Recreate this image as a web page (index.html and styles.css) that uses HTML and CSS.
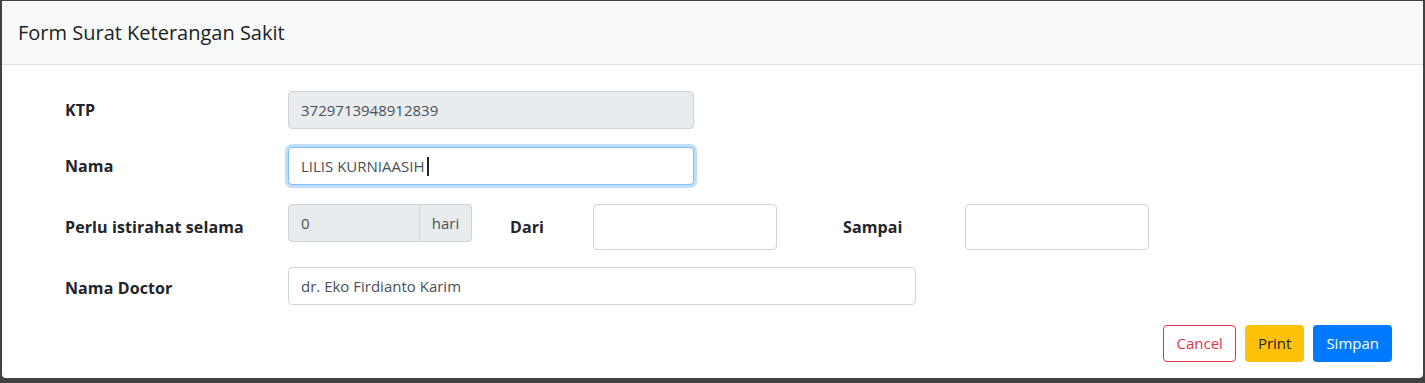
FILE: index.html
```html
<!DOCTYPE html>
<html lang="id">
<head>
    <meta charset="UTF-8">
    <meta name="viewport" content="width=device-width, initial-scale=1.0">
    <title>Form Surat Keterangan Sakit</title>
    <link rel="stylesheet" href="styles.css">
</head>
<body>

  <div class="modal">

    <div class="modal-header">
        <h5 class="modal-title">Form Surat Keterangan Sakit</h5>
    </div>

    <div class="modal-body">

        <div class="form-row">
            <label class="label">KTP</label>
            <input class="form-control w-md" type="text" value="3729713948912839" disabled>
        </div>

        <div class="form-row">
            <label class="label">Nama</label>
            <div class="form-control w-md focused">LILIS KURNIAASIH<span class="caret"></span></div>
        </div>

        <div class="form-row tall">
            <label class="label">Perlu istirahat selama</label>
            <div class="input-group">
                <input class="form-control" type="text" value="0" disabled>
                <span class="addon">hari</span>
            </div>
            <label class="label label-dari">Dari</label>
            <input class="form-control w-sm tall-input" type="text">
            <label class="label label-sampai">Sampai</label>
            <input class="form-control w-sm tall-input" type="text">
        </div>

        <div class="form-row">
            <label class="label label-low">Nama Doctor</label>
            <input class="form-control w-lg" type="text" value="dr. Eko Firdianto Karim">
        </div>

    </div>

    <div class="modal-footer">
        <button class="btn btn-cancel">Cancel</button>
        <button class="btn btn-print">Print</button>
        <button class="btn btn-save">Simpan</button>
    </div>

  </div>

</body>
</html>
```

FILE: styles.css
```css
*{
    margin:0;
    padding:0;
    box-sizing:border-box;
}

html{
    --text:#212529;
    --input-clr:#495057;
    --border:#ced4da;
    --disabled-bg:#e9ecef;
    --header-bg:#f8f9fa;
    --danger:#dc3545;
    --warning:#ffc107;
    --primary:#007bff;
}

body{
    width:1425px;
    height:383px;
    background:#424242;
    font-family:"Open Sans", "Noto Sans", sans-serif;
    font-size:16px;
    color:var(--text);
    padding:1px 2px 0 2px;
    overflow:hidden;
}

.modal{
    width:1421px;
    height:377px;
    background:#fff;
    border-radius:0 0 4px 4px;
    display:flex;
    flex-direction:column;
}

.modal-header{
    height:64px;
    background:var(--header-bg);
    border-bottom:1px solid #dee2e6;
    padding:0 16px;
    display:flex;
    align-items:center;
}

.modal-title{
    font-size:20px;
    font-weight:500;
    line-height:1.5;
    color:#1b1f23;
}

.modal-body{
    padding:26px 0 0 63px;
    display:flex;
    flex-direction:column;
    gap:18px;
}

.form-row{
    display:flex;
    align-items:center;
    height:38px;
}

.form-row.tall{
    height:46px;
    margin-top:1px;
    margin-bottom:-1px;
}

.label{
    font-weight:700;
    width:223px;
    font-size:16px;
    letter-spacing:0.1px;
}

.label-low{ padding-top:4px; }
.label-dari{ width:83px; margin-left:38px; }
.label-sampai{ width:122px; margin-left:66px; }

.form-control{
    height:38px;
    border:1px solid var(--border);
    border-radius:4px;
    padding:0 12px;
    font-family:inherit;
    font-size:15px;
    color:var(--input-clr);
    background:#fff;
    display:flex;
    align-items:center;
    outline:none;
}

.form-control:disabled{ background:var(--disabled-bg); }

.w-md{ width:406px; }
.w-lg{ width:628px; }
.w-sm{ width:184px; }
.tall-input{ height:46px; }

.focused{
    border-color:#80bdff;
    box-shadow:0 0 0 3px rgba(0,123,255,.25);
}

.caret{
    display:inline-block;
    width:2px;
    height:19px;
    background:#222;
    margin-left:3px;
}

.input-group{
    display:flex;
    width:184px;
    align-self:flex-start;
}

.input-group .form-control{
    width:132px;
    border-radius:4px 0 0 4px;
}

.addon{
    width:52px;
    height:38px;
    background:var(--disabled-bg);
    border:1px solid var(--border);
    border-left:none;
    border-radius:0 4px 4px 0;
    font-size:15px;
    color:var(--input-clr);
    display:flex;
    align-items:center;
    justify-content:center;
}

.modal-footer{
    margin-top:auto;
    padding:0 31px 16px 0;
    display:flex;
    justify-content:flex-end;
    gap:9px;
}

.btn{
    height:37px;
    padding:0 12px;
    border:1px solid transparent;
    border-radius:4px;
    font-family:inherit;
    font-size:15px;
    line-height:1;
}

.btn-cancel{ color:var(--danger); border-color:var(--danger); background:#fff; }
.btn-print{ background:var(--warning); color:var(--text); }
.btn-save{ background:var(--primary); color:#fff; }
```
